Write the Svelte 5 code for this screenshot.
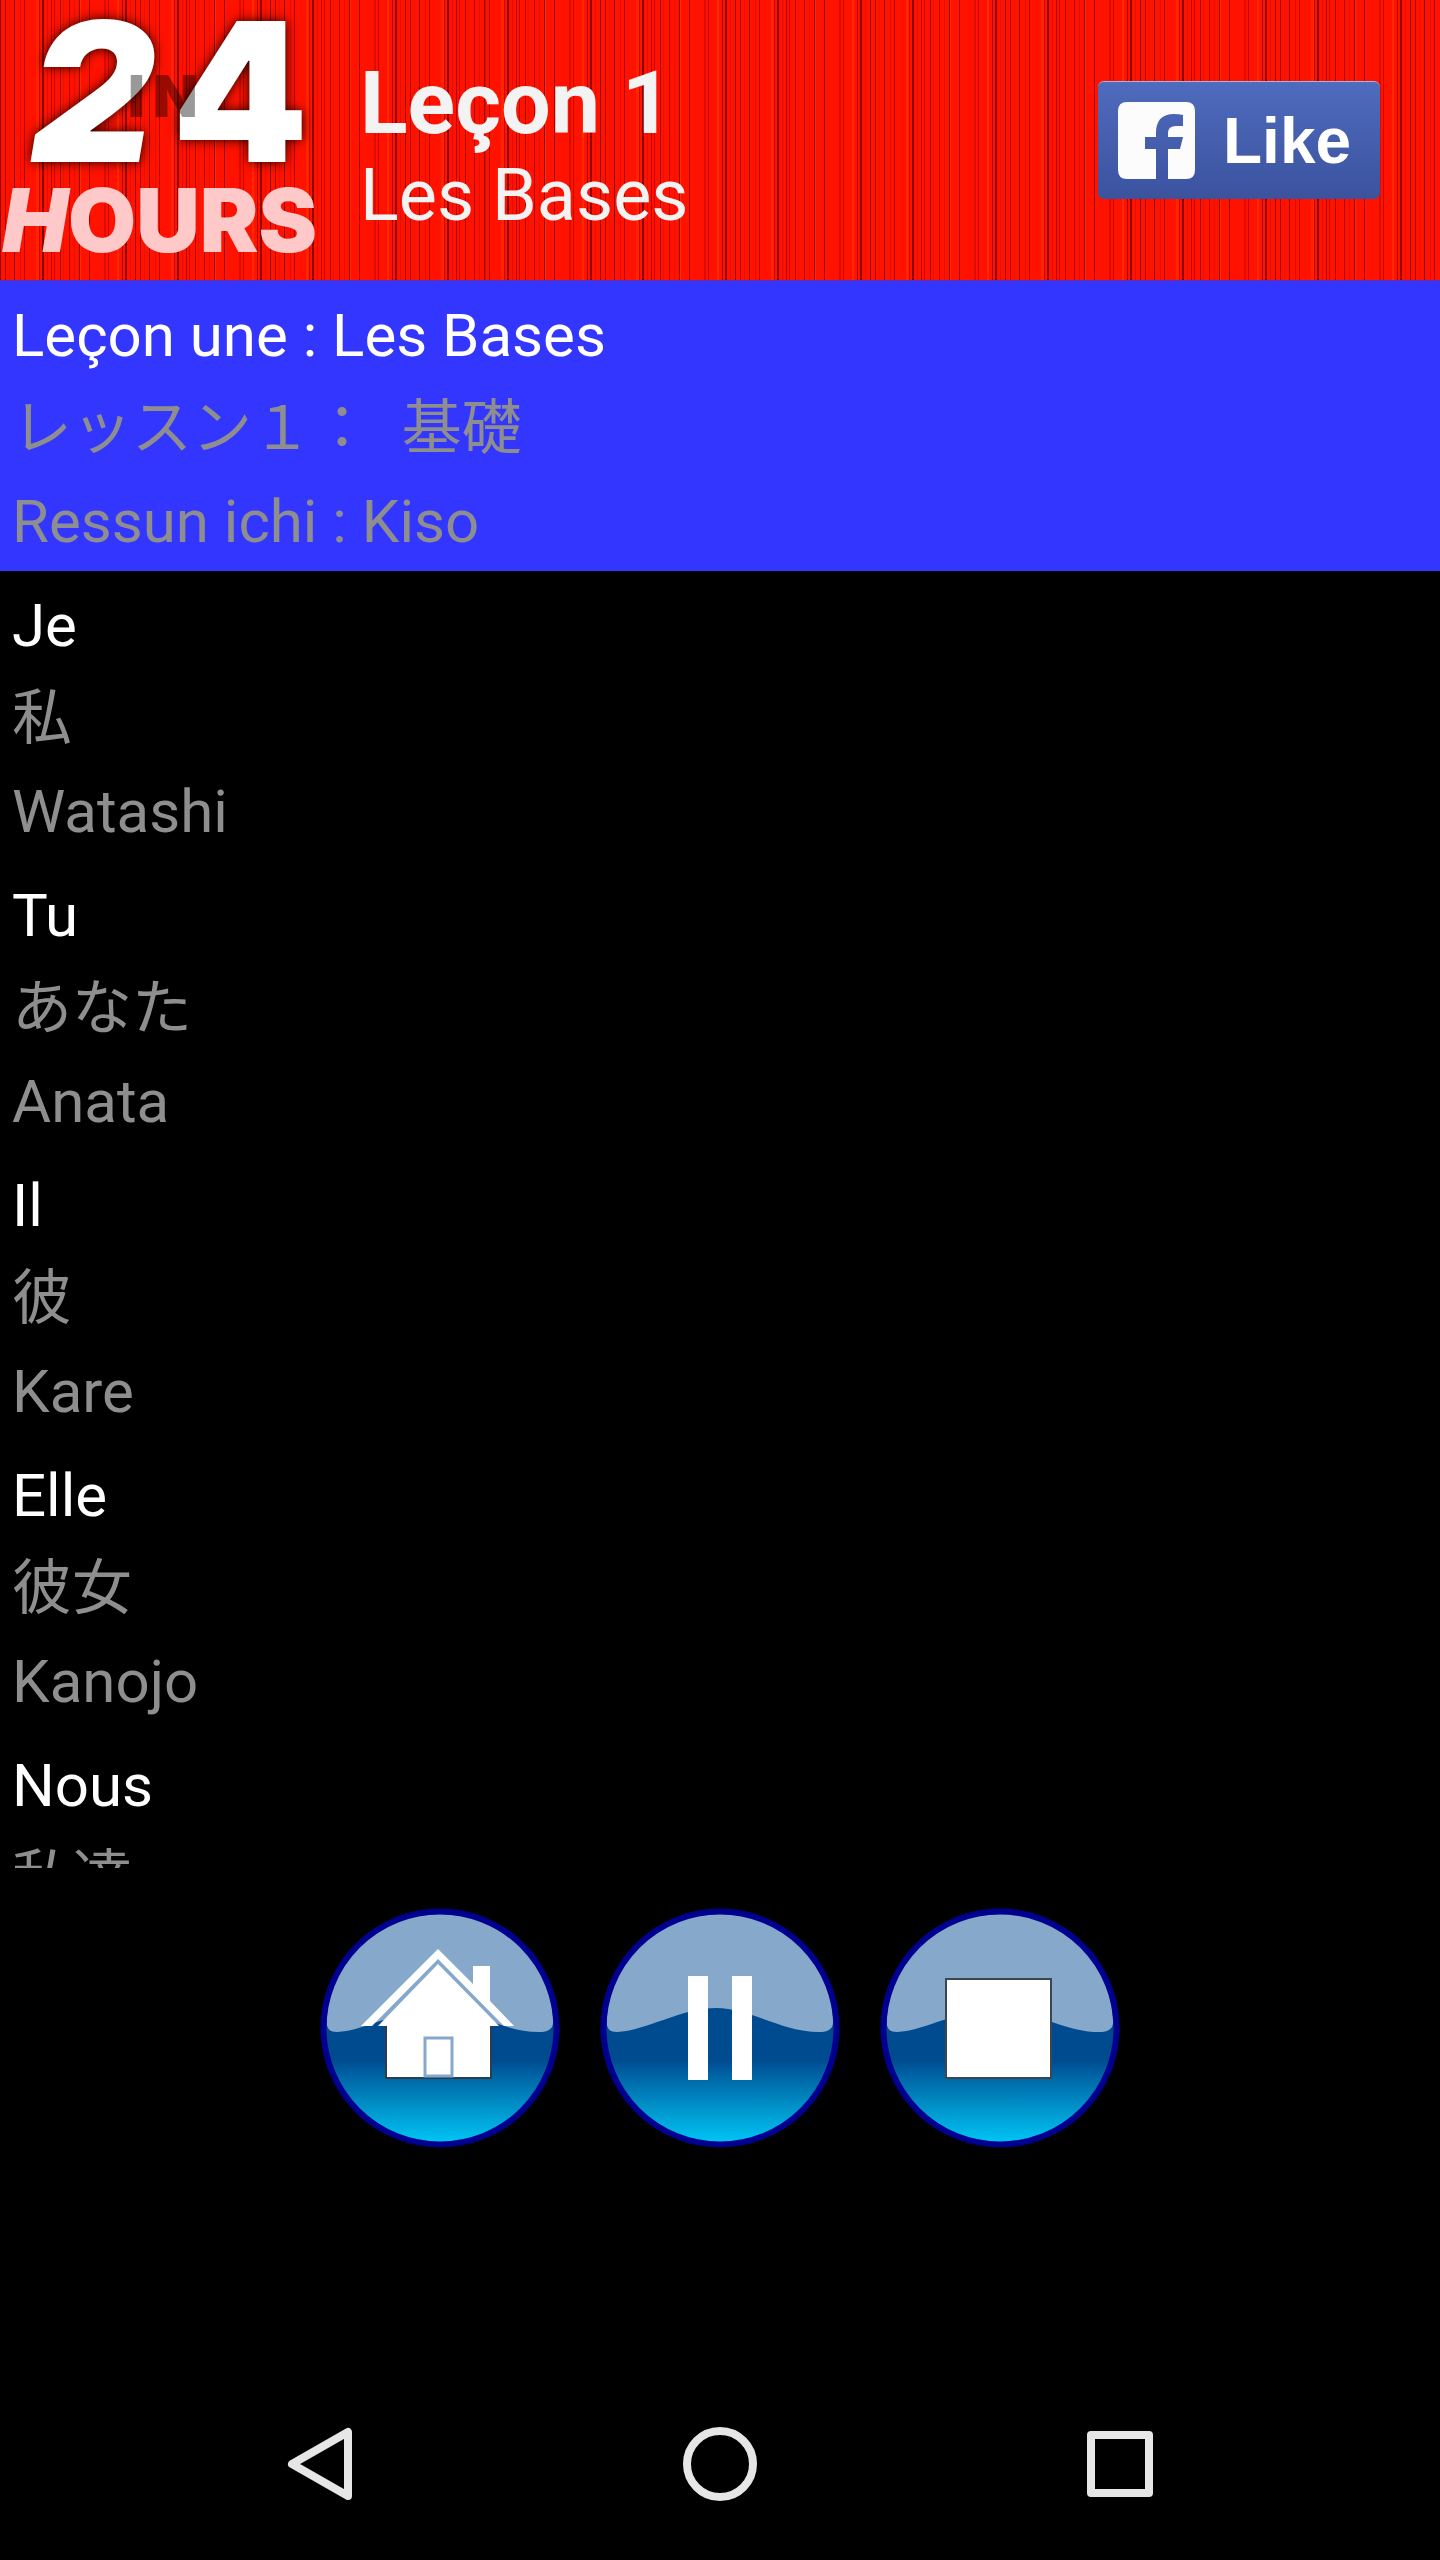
<script>
    let playing = $state(true);
    let liked = $state(false);

    const phrases = [
        { fr: 'Leçon une : Les Bases', ja: 'レッスン１：\u00a0 基礎', romaji: 'Ressun ichi : Kiso' },
        { fr: 'Je', ja: '私', romaji: 'Watashi' },
        { fr: 'Tu', ja: 'あなた', romaji: 'Anata' },
        { fr: 'Il', ja: '彼', romaji: 'Kare' },
        { fr: 'Elle', ja: '彼女', romaji: 'Kanojo' },
        { fr: 'Nous', ja: '私達', romaji: 'Watashitachi' }
    ];

    // curtain folds: [x, width, colour]
    const folds = [
        [0, 2, '#8a0000'],
        [5, 1, '#e01000'],
        [9, 1, '#b00000'],
        [12, 1, '#c80800'],
        [18, 1, '#a80000'],
        [21, 1, '#e81400'],
        [27, 1, '#b40400'],
        [32, 1, '#e41000'],
        [37, 1, '#8c1000'],
        [38, 1, '#ff2a00'],
        [47, 1, '#a00000'],
        [62, 2, '#dc0c00'],
        [66, 1, '#c40800'],
        [75, 2, '#ff2a00'],
        [80, 1, '#a80000'],
        [83, 2, '#900000'],
        [88, 1, '#e41000'],
        [93, 1, '#8c0000'],
        [98, 1, '#b00400'],
        [102, 1, '#e81400'],
        [107, 1, '#900000'],
        [113, 1, '#e01000'],
        [117, 1, '#b40400'],
        [129, 3, '#ff2400'],
        [132, 1, '#c80800']
    ];

    function togglePlay() {
        playing = !playing;
    }
</script>

{#snippet ball()}
    <circle cx="120" cy="120" r="115" fill="url(#ball)" />
    <path
        d="M120 6 C58 6 9 54 7 112 C6 120 9 124 17 124 C45 123 82 100 116 100 C150 100 182 124 219 124 C229 124 234 120 233 112 C231 54 182 6 120 6 Z"
        fill="#85a8cb"
    />
    <circle cx="120" cy="120" r="116.5" fill="none" stroke="#000090" stroke-width="6" />
{/snippet}

<div class="app">
    <header class="banner">
        <svg class="curtain" aria-hidden="true">
            <defs>
                <pattern id="folds-left" x="42" width="135" height="280" patternUnits="userSpaceOnUse">
                    {#each folds as [x, width, fill]}
                        <rect {x} {width} {fill} height="280" />
                    {/each}
                </pattern>
                <pattern id="folds-right" x="102" width="135" height="280" patternUnits="userSpaceOnUse">
                    {#each folds as [x, width, fill]}
                        <rect {x} {width} {fill} height="280" />
                    {/each}
                </pattern>
            </defs>
            <rect width="485" height="100%" fill="url(#folds-left)" />
            <rect x="485" width="100%" height="100%" fill="url(#folds-right)" />
        </svg>

        <svg class="logo" viewBox="0 0 340 280" role="img" aria-label="24 in hours">
            <g class="digits">
                <text class="slant" x="30" y="162">2</text>
                <text x="172" y="162">4</text>
            </g>
            <text class="in" y="117"><tspan x="128">I</tspan><tspan x="153">N</tspan></text>
            <text class="hours" x="2" y="252"><tspan class="slant">H</tspan>OURS</text>
        </svg>

        <div class="titles">
            <h1>Leçon 1</h1>
            <h2>Les Bases</h2>
        </div>

        <button class="like" aria-pressed={liked} onclick={() => (liked = !liked)}>
            <svg width="77" height="77" viewBox="0 0 77 77" aria-hidden="true">
                <path
                    d="M9 0 H68 Q77 0 77 9 V68 Q77 77 68 77 H50 V47 H62 L65 35 H50 V31 Q50 24 58 24 H65 V13 Q61 12 56 12 Q38 12 38 31 V35 H27 V47 H38 V77 H9 Q0 77 0 68 V9 Q0 0 9 0 Z"
                    fill="#fcfcfc"
                />
            </svg>
            Like
        </button>
    </header>

    <main class="phrases">
        {#each phrases as phrase, i}
            <section class="phrase" class:active={i === 0}>
                <p class="fr" lang="fr">{phrase.fr}</p>
                <p lang="ja">{phrase.ja}</p>
                <p>{phrase.romaji}</p>
            </section>
        {/each}
    </main>

    <div class="controls">
        <button class="round" aria-label="Accueil">
            <svg viewBox="0 0 240 240">
                <defs>
                    <linearGradient id="ball" x1="0" y1="0" x2="0" y2="1">
                        <stop offset="0.64" stop-color="#004b90" />
                        <stop offset="0.68" stop-color="#005a9c" />
                        <stop offset="1" stop-color="#00c6f4" />
                    </linearGradient>
                </defs>
                {@render ball()}
                <path d="M66 118 V170 H171 V118" fill="none" stroke="#2a3e50" stroke-width="2" />
                <path d="M118 41 L153 76 V58 H170 V93 L194 118 H184 L118 51 L52 118 H41 Z" fill="#fff" />
                <path d="M118 56 L179 118 H170 V169 H67 V118 H58 Z" fill="#fff" />
                <rect x="105" y="130" width="27" height="38" fill="#fff" stroke="#85a8cb" stroke-width="3" />
            </svg>
        </button>
        <button class="round" aria-label={playing ? 'Pause' : 'Lecture'} onclick={togglePlay}>
            <svg viewBox="0 0 240 240">
                {@render ball()}
                {#if playing}
                    <rect x="88" y="68" width="20" height="104" fill="#fff" />
                    <rect x="132" y="68" width="20" height="104" fill="#fff" />
                {:else}
                    <path d="M88 68 L168 120 L88 172 Z" fill="#fff" />
                {/if}
            </svg>
        </button>
        <button class="round" aria-label="Stop" onclick={() => (playing = false)}>
            <svg viewBox="0 0 240 240">
                {@render ball()}
                <rect x="66" y="71" width="105" height="99" fill="#fff" stroke="#3a4650" stroke-width="2" />
            </svg>
        </button>
    </div>

    <nav class="navbar">
        <button aria-label="Retour">
            <svg width="80" height="80" viewBox="0 0 80 80">
                <path d="M68 8 V72 L12 40 Z" />
            </svg>
        </button>
        <button aria-label="Écran d'accueil">
            <svg width="80" height="80" viewBox="0 0 80 80">
                <circle cx="40" cy="40" r="33" />
            </svg>
        </button>
        <button aria-label="Applications récentes">
            <svg width="80" height="80" viewBox="0 0 80 80">
                <rect x="11" y="11" width="58" height="58" />
            </svg>
        </button>
    </nav>
</div>

<style>
    :global(body) {
        margin: 0;
        background: #000;
    }
    .app {
        display: flex;
        flex-direction: column;
        height: 100vh;
        background: #000;
        color: #fff;
        font-family: Roboto, "Noto Sans CJK JP", sans-serif;
    }
    button {
        border: none;
        padding: 0;
        background: none;
        color: inherit;
        cursor: pointer;
    }
    svg {
        display: block;
    }

    .banner {
        position: relative;
        display: flex;
        align-items: center;
        flex-shrink: 0;
        height: 280px;
        padding-right: 60px;
        gap: 20px;
        background: #ff1200;
        border-bottom: 1px solid #6c2ab4;
    }
    .curtain {
        position: absolute;
        inset: 0;
        width: 100%;
        height: 100%;
    }
    .logo {
        position: relative;
        width: 340px;
        height: 280px;
        flex-shrink: 0;
        font-family: Inter, "Liberation Sans", sans-serif;
        font-weight: 900;
    }
    .slant {
        font-style: italic;
    }
    .digits {
        font-size: 194px;
        fill: #fff;
        filter: drop-shadow(0 0 6px rgba(0, 0, 0, 0.9));
    }
    .in {
        font-size: 58px;
        fill: rgba(0, 0, 0, 0.4);
    }
    .hours {
        font-size: 88px;
        fill: #ffc9c9;
    }
    .titles {
        position: relative;
        flex: 1;
        padding-top: 10px;
        color: #f3f3f3;
    }
    h1,
    h2,
    p {
        margin: 0;
    }
    h1 {
        font-size: 88px;
        line-height: 102px;
        font-weight: 700;
    }
    h2 {
        font-size: 72px;
        line-height: 84px;
        font-weight: 400;
    }
    .like {
        position: relative;
        display: flex;
        align-items: center;
        gap: 28px;
        box-sizing: border-box;
        width: 282px;
        height: 118px;
        padding-left: 20px;
        border-top: 1px solid #a9b6de;
        border-radius: 6px;
        background: linear-gradient(#4f6bbd, #3b539f);
        color: #fff;
        font-family: "Liberation Sans", Arial, sans-serif;
        font-size: 64px;
        font-weight: 700;
    }

    .phrases {
        flex: 1;
        min-height: 0;
        overflow: hidden;
    }
    .phrase {
        padding: 8px 12px 3px;
        color: #8e8e8e;
        font-size: 60px;
    }
    .phrase.active {
        background: #3336ff;
    }
    .phrase p {
        height: 93px;
        line-height: 93px;
    }
    .phrase .fr {
        color: #fff;
    }

    .controls {
        display: flex;
        justify-content: center;
        flex-shrink: 0;
        gap: 40px;
        padding: 40px 20px 220px;
    }
    .round {
        width: 240px;
        height: 240px;
        border-radius: 50%;
    }

    .navbar {
        display: flex;
        flex-shrink: 0;
        height: 192px;
        padding: 0 120px;
    }
    .navbar button {
        display: flex;
        flex: 1;
        align-items: center;
        justify-content: center;
    }
    .navbar svg {
        fill: none;
        stroke: #e6e6e6;
        stroke-width: 8px;
        stroke-linejoin: round;
    }
</style>
